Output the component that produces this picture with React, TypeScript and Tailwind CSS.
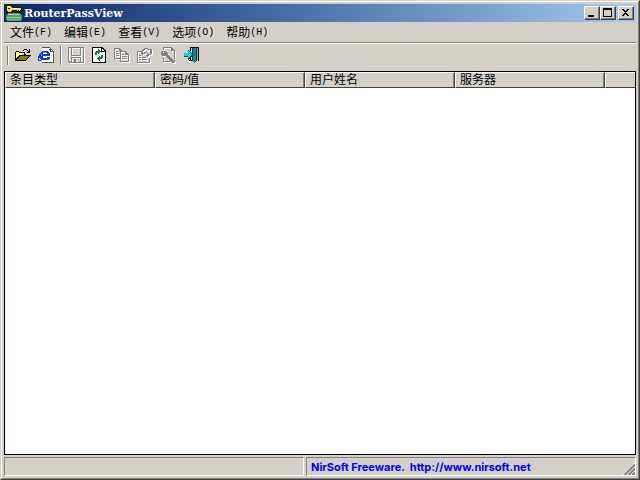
import type { ReactNode } from "react"

const menus = [
  { label: "文件", key: "F" },
  { label: "编辑", key: "E" },
  { label: "查看", key: "V" },
  { label: "选项", key: "O" },
  { label: "帮助", key: "H" },
]

const columns = ["条目类型", "密码/值", "用户姓名", "服务器"]

function Icon({ children }: { children: ReactNode }) {
  return (
    <svg width="16" height="16" viewBox="0 0 16 16" shapeRendering="crispEdges" fill="none" aria-hidden="true">
      {children}
    </svg>
  )
}

// Greyed glyph with the white edge one pixel down and right
function EmbossedIcon({ path }: { path: string }) {
  return (
    <svg width="17" height="17" viewBox="0 0 17 17" shapeRendering="crispEdges" aria-hidden="true">
      <path d={path} fill="#fff" fillRule="evenodd" transform="translate(1 1)" />
      <path d={path} fill="#808080" fillRule="evenodd" />
    </svg>
  )
}

function AppIcon() {
  return (
    <Icon>
      <path d="M2 8h12v1h1v1h1v5h-1v1H1v-1H0v-5h1V9h1z" fill="#4f9a62" />
      <path d="M2 9h12v1H2zM1 12h14v1H1z" fill="#a9d4a6" />
      <path d="M1 14h14v1H1z" fill="#7cb886" />
      <path d="M1 0h5v1h1v1h8v1h1v4h-1v1h-3V7h-2v1H8V7H6v1H1V7H0V1h1z" fill="#1a1a10" />
      <path d="M1 1h4v1h1v1h9v2h-1v1h-1V5h-1v1h-1V5H6v1H5v1H2V6H1z" fill="#f2e03c" />
      <path d="M2 3h2v1H2z" fill="#1a1a10" />
      <path d="M2 1h2v1H2zM7 3h6v1H7z" fill="#fff8a0" />
    </Icon>
  )
}

function OpenIcon() {
  return (
    <Icon>
      <path d="M1 4h3v1h6v2h1v1h5v1h-1v1h-1v1h-1v1h-1v1h-1v1H0V5h1z" fill="#000" />
      <path d="M1 5h3v1h5v2H4v1H3v1H2v1H1z" fill="#ffff66" />
      <path d="M5 9h9v1h-1v1h-1v1h-1v1H2v-1h1v-1h1v-1h1z" fill="#808000" />
      <path d="M9 2h3v1H9zM8 3h1v1H8zM12 3h1v1h1V2h1v4h-3V5h1V4h-1z" fill="#000" />
    </Icon>
  )
}

function BrowserIcon() {
  return (
    <Icon>
      <path d="M4 1h8l3 3v11H4z" fill="#fff" />
      <path d="M4 0h8v1H4zM12 1h1v3h3v12H4v-1h11V5h-3V1zM13 2h1v1h-1zM14 3h1v1h-1z" fill="#555" />
      <path d="M4 4h6v1h1v1h1v3H5v2h4v-1h3v2h-1v1H3v-1H2v-1H1V7h1V6h1V5h1zM5 7h4V6H5z" fill="#1238d8" fillRule="evenodd" />
      <path d="M0 9h1v4h2v1H0zM8 3h3V2h2v3h-1V3z" fill="#1238d8" />
      <path d="M5 5h3v1H5zM3 7h1v2H3z" fill="#62a8ff" />
    </Icon>
  )
}

function RefreshIcon() {
  return (
    <Icon>
      <path d="M0 0h10l4 4v12H0z" fill="#000" />
      <path d="M1 1h8v4h4v10H1zM10 2l2 2h-2z" fill="#fff" />
      <path d="M6 2h1v1h1v1h1v1H8v1H7v1H6V6H5v2H3V5h1V4h2z" fill="#008a1c" />
      <path d="M11 8v3h-1v1H8v2H7v-1H6v-1H5v-1h1v-1h1V9h1v1h1V8z" fill="#008a1c" />
    </Icon>
  )
}

function ExitIcon() {
  return (
    <Icon>
      <path d="M6 0h9v14h-1V1H7v3H6zM6 11h1v2h2v1H5v-1h1z" fill="#000" />
      <path d="M8 1h6v1h-1v12h-1v1h-1v1h-1v-1H9v-1H8z" fill="#1d8384" />
      <path d="M8 1h1v13H8zM12 2h1v12h-1z" fill="#003c40" />
      <path d="M13 2h1v11h-1z" fill="#8fb4b4" />
      <path d="M0 6h4V3h1v1h1v1h1v1h1v1h1v2H8v1H7v1H6v1H5v1H4v-3H0z" fill="#004c50" />
      <path d="M0 6h4V4h1v1h1v1h1v1h1v1H7v1H6v1H5v1H4V9H0z" fill="#00dce0" />
    </Icon>
  )
}

const savePath =
  "M0 0h16v16H1v-1H0zM1 1v13h1v1h1v-5h10v5h2V1h-2v8H3V1zM4 1v7h8V1zM4 11v4h2v-3h2v3h4v-4z"
const copyPath =
  "M0 1h6v1h1v1h1v1h4v1h1v1h1v1h1v8H6v-3H0zM1 2v9h5V4H5V2zM7 5v9h7V8h-3V5zM2 4h2v1H2zM2 6h3v1H2zM2 8h3v1H2zM8 7h2v1H8zM8 9h5v1H8zM8 11h5v1H8z"
const propertiesPath =
  "M0 4h4v1H1v10h11v-4h1v5H0zM7 1h4v1h4v5h-1v1h-2v1h-1v1h-1V9H9V8h1V6H8v1H6v1H5V7H4V4h1V3h1V2h1zM7 3v1H6v2h1V5h3v1h1v1h2V3h-2V2H8v1zM2 8h2v1H2zM2 10h2v1H2zM5 10h4v1H5zM2 12h2v1H2zM5 12h5v1H5z"
const findPath =
  "M3 0h9v1h1v1h1v1h1v9h-1V4h-3V1H4v2H3zM2 4h4v1h1v1h1v2h1v1h1v1h1v1h1v1h1v1h1v1h1v2h-3v-1h-1v-1h-1v-1H9v-1H8v-1H7v-1H6v-1H3V9H2V8H1V5h1zM3 5v1h1V5zM3 11h1v3h6v1H3z"

function ToolButton({ label, disabled, children }: { label: string; disabled?: boolean; children: ReactNode }) {
  return (
    <button type="button" aria-label={label} disabled={disabled} className="flex h-[22px] w-[23px] items-center justify-center">
      {children}
    </button>
  )
}

function Divider() {
  return <div className="mx-[3px] h-[19px] w-0.5 border-l border-r border-l-[#808080] border-r-white" />
}

function CaptionButton({ label, children }: { label: string; children: ReactNode }) {
  return (
    <button
      type="button"
      aria-label={label}
      className="flex h-[14px] w-4 items-center justify-center border border-t-white border-r-[#404040] border-b-[#404040] border-l-white bg-[#d4d0c8] shadow-[inset_-1px_-1px_0_#808080]"
    >
      <svg width="10" height="10" viewBox="0 0 10 10" shapeRendering="crispEdges" fill="#000" aria-hidden="true">
        {children}
      </svg>
    </button>
  )
}

export default function App() {
  return (
    <div className="flex h-screen flex-col border border-t-[#d4d0c8] border-r-[#404040] border-b-[#404040] border-l-[#d4d0c8] bg-[#d4d0c8] font-['Liberation_Sans','Noto_Sans_CJK_SC',sans-serif] text-xs text-black">
      <div className="flex min-h-0 flex-1 flex-col border border-t-white border-r-[#808080] border-b-[#808080] border-l-white p-0.5">
        {/* Title bar */}
        <header className="flex h-[18px] shrink-0 items-center bg-linear-to-r from-[#0a246a] to-[#a6caf0] px-0.5">
          <AppIcon />
          <h1 className="ml-0.5 flex-1 pt-0.5 font-['DejaVu_Serif',serif] text-[11px] leading-4 font-bold text-white">RouterPassView</h1>
          <div className="flex">
            <CaptionButton label="最小化">
              <path d="M1 7h6v2H1z" />
            </CaptionButton>
            <CaptionButton label="最大化">
              <path d="M0 0h9v9H0zM1 2v6h7V2z" fillRule="evenodd" />
            </CaptionButton>
            <div className="w-0.5" />
            <CaptionButton label="关闭">
              <path d="M1 1h2v1h1v1h1V2h1V1h2v1H7v1H6v1H5v1h1v1h1v1h1v1H6V7H5V6H4v1H3v1H1V7h1V6h1V5h1V4H3V3H2V2H1z" />
            </CaptionButton>
          </div>
        </header>

        {/* Menu */}
        <nav className="flex h-5 shrink-0 items-center pt-0.5">
          {menus.map((menu) => (
            <button key={menu.key} type="button" className="flex items-center px-1.5 leading-4">
              {menu.label}
              <span className="font-['Liberation_Mono',monospace] text-[10px]">({menu.key})</span>
            </button>
          ))}
        </nav>

        {/* Toolbar */}
        <div className="flex h-[29px] shrink-0 items-center border-t border-[#808080] pb-1 shadow-[inset_0_1px_0_#fff]">
          <div className="mr-0.5 ml-[3px] h-[19px] w-0.5 border-l border-r border-l-[#808080] border-r-white" />
          <ToolButton label="打开"><OpenIcon /></ToolButton>
          <ToolButton label="浏览器"><BrowserIcon /></ToolButton>
          <Divider />
          <ToolButton label="保存" disabled><EmbossedIcon path={savePath} /></ToolButton>
          <ToolButton label="刷新"><RefreshIcon /></ToolButton>
          <ToolButton label="复制" disabled><EmbossedIcon path={copyPath} /></ToolButton>
          <ToolButton label="属性" disabled><EmbossedIcon path={propertiesPath} /></ToolButton>
          <ToolButton label="查找" disabled><EmbossedIcon path={findPath} /></ToolButton>
          <ToolButton label="退出"><ExitIcon /></ToolButton>
        </div>

        {/* List */}
        <main className="min-h-0 flex-1 overflow-hidden border border-black bg-white">
          <table className="w-full table-fixed border-separate border-spacing-0">
            <thead>
              <tr className="bg-[#d4d0c8]">
                {columns.map((column) => (
                  <th
                    key={column}
                    scope="col"
                    className="h-4 w-[150px] border border-t-white border-r-[#404040] border-b-[#404040] border-l-white px-1 py-0 text-left leading-[14px] font-normal shadow-[inset_-1px_0_0_#808080]"
                  >
                    {column}
                  </th>
                ))}
                <td className="border border-t-white border-r-0 border-b-[#404040] border-l-white p-0" />
              </tr>
            </thead>
          </table>
        </main>

        {/* Status bar */}
        <footer className="mt-0.5 flex h-[19px] shrink-0 gap-0.5">
          <div className="w-[300px] border border-t-[#808080] border-r-white border-b-white border-l-[#808080]" />
          <div className="flex flex-1 items-center justify-between border border-t-[#808080] border-r-white border-b-white border-l-[#808080] pl-1">
            <a href="http://www.nirsoft.net" className="font-['Inter','Liberation_Sans',sans-serif] text-[11px] leading-4 font-bold whitespace-pre text-[#0000ff]">
              {"NirSoft Freeware.  http://www.nirsoft.net"}
            </a>
            <svg width="12" height="12" viewBox="0 0 12 12" className="self-end" aria-hidden="true">
              <path d="M0 12 12 0M4 12l8-8M8 12l4-4" stroke="#fff" />
              <path d="M1.500 12 12 1.500M5.500 12 12 5.500M9.500 12 12 9.500" stroke="#808080" strokeWidth="2" />
            </svg>
          </div>
        </footer>
      </div>
    </div>
  )
}
